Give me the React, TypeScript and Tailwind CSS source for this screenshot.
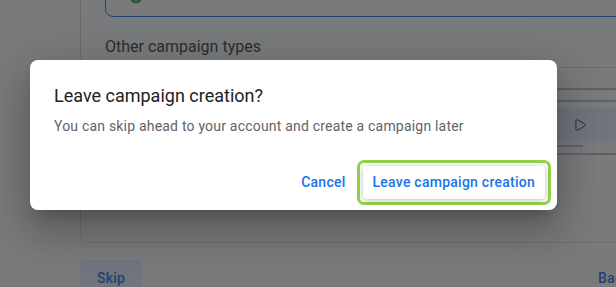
import React from "react";
import { Play } from "lucide-react";

export default function App() {
  return (
    <div className="relative w-[616px] h-[287px] overflow-hidden bg-white font-['Roboto',sans-serif]">
      {/* Page behind the dialog */}
      <div className="pl-[80px]">
        <div className="w-[700px] h-[243px] border border-t-0 border-[#dadce0] rounded-b-lg pl-[24px] flex flex-col">
          <div className="-mt-[23px] h-[40px] w-[680px] border border-[#1a73e8] rounded-lg flex items-end pl-[23px] pb-[12px]">
            <svg width="14" height="14" viewBox="0 0 14 14">
              <circle cx="7" cy="7" r="5" fill="none" stroke="#34a853" strokeWidth="3" />
              <path d="M2 7a5 5 0 0 1 5-5" fill="none" stroke="#4285f4" strokeWidth="3" />
            </svg>
          </div>
          <div className="mt-[18px] text-[16px] leading-[24px] text-[#3c4043]">Other campaign types</div>
          <div className="mt-[8px] h-px bg-[#dadce0]" />
          <div className="mt-[20px] h-[2px] bg-[#bdc1c6]" />
          <div className="mt-[10px] h-[2px] bg-[#bdc1c6]" />
          <div className="mt-[6px] h-[33px] bg-[#e8f0fe] flex items-center pl-[468px]">
            <Play size={14} strokeWidth={1.5} className="text-[#202124]" />
          </div>
          <div className="mt-[4px] h-[2px] w-[478px] bg-[#bdc1c6]" />
          <div className="mt-[6px] h-[2px] bg-[#bdc1c6]" />
        </div>
        <div className="mt-[17px] w-[566px] flex justify-between">
          <button className="h-[36px] px-[17px] rounded bg-[#e8f0fe] text-[14px] font-medium tracking-[0.25px] text-[#1a73e8]">Skip</button>
          <button className="h-[36px] px-[16px] text-[14px] font-medium tracking-[0.25px] text-[#1a73e8]">Back</button>
        </div>
      </div>

      {/* Scrim */}
      <div className="absolute inset-0 bg-[rgba(32,33,36,0.6)]" />

      {/* Dialog */}
      <div className="absolute left-[30px] top-[60px] w-[527px] h-[150px] bg-white rounded-lg flex flex-col shadow-[0_11px_15px_-7px_rgba(0,0,0,0.2),0_24px_38px_3px_rgba(0,0,0,0.14),0_9px_46px_8px_rgba(0,0,0,0.12)]">
        <div className="px-[24px] pt-[24px]">
          <h2 className="text-[18px] leading-[24px] text-[#202124]">Leave campaign creation?</h2>
          <p className="mt-[8px] text-[14px] leading-[20px] tracking-[0.2px] text-[#5f6368]">
            You can skip ahead to your account and create a campaign later
          </p>
        </div>
        <div className="mt-auto flex items-center justify-end gap-[3px] pr-[6px] pb-[5px]">
          <button className="h-[36px] px-[8px] text-[14px] font-medium tracking-[0.25px] text-[#1a73e8]">Cancel</button>
          <div className="border-[3px] border-[#92d34a] rounded-[7px] p-[3px]">
            <button className="h-[33px] px-[10px] rounded text-[14px] font-medium tracking-[0.25px] text-[#1a73e8] bg-white shadow-[0_1px_6px_rgba(0,0,0,0.28)]">
              Leave campaign creation
            </button>
          </div>
        </div>
      </div>
    </div>
  );
}
